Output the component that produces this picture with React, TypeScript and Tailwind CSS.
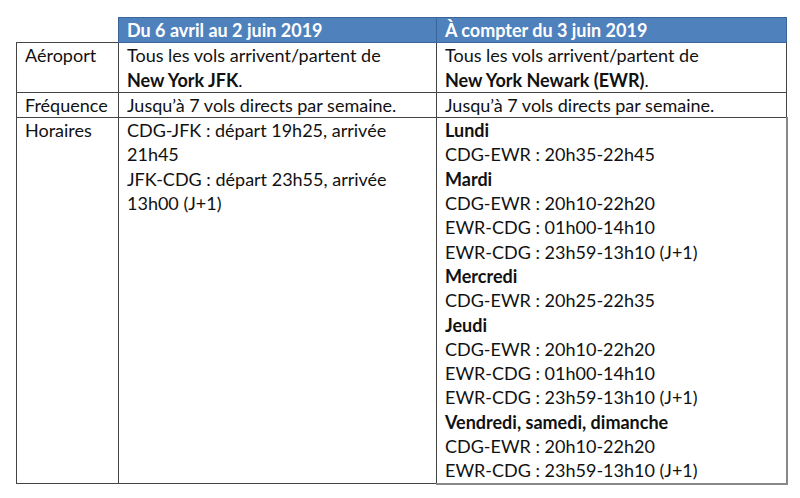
export default function App() {
  const font = { fontFamily: "Lato, 'Open Sans', sans-serif" };
  const cell = "align-top px-[8px] py-0 leading-[24.3px] border border-[#444]";
  const newark: { bold?: boolean; t: string }[] = [
    { bold: true, t: "Lundi" },
    { t: "CDG-EWR : 20h35-22h45" },
    { bold: true, t: "Mardi" },
    { t: "CDG-EWR : 20h10-22h20" },
    { t: "EWR-CDG : 01h00-14h10" },
    { t: "EWR-CDG : 23h59-13h10 (J+1)" },
    { bold: true, t: "Mercredi" },
    { t: "CDG-EWR : 20h25-22h35" },
    { bold: true, t: "Jeudi" },
    { t: "CDG-EWR : 20h10-22h20" },
    { t: "EWR-CDG : 01h00-14h10" },
    { t: "EWR-CDG : 23h59-13h10 (J+1)" },
    { bold: true, t: "Vendredi, samedi, dimanche" },
    { t: "CDG-EWR : 20h10-22h20" },
    { t: "EWR-CDG : 23h59-13h10 (J+1)" },
  ];

  return (
    <div className="w-[800px] h-[498px] bg-white pt-[17px] pl-[16px]" style={font}>
      <table className="border-collapse text-[18px] text-[#111] table-fixed w-[770px]">
        <colgroup>
          <col className="w-[102px]" />
          <col className="w-[318px]" />
          <col className="w-[350px]" />
        </colgroup>
        <thead>
          <tr>
            <th className="p-0 border-0"></th>
            <th className="text-left font-bold text-white bg-[#4f81bd] border border-[#3a659a] px-[8px] py-0 leading-[24.3px]">
              Du 6 avril au 2 juin 2019
            </th>
            <th className="text-left font-bold text-white bg-[#4f81bd] border border-[#3a659a] px-[8px] py-0 leading-[24.3px]">
              À compter du 3 juin 2019
            </th>
          </tr>
        </thead>
        <tbody>
          <tr>
            <td className={cell}>Aéroport</td>
            <td className={cell}>
              Tous les vols arrivent/partent de
              <br />
              <b>New York JFK</b>.
            </td>
            <td className={cell}>
              Tous les vols arrivent/partent de
              <br />
              <b>New York Newark (EWR)</b>.
            </td>
          </tr>
          <tr>
            <td className={cell}>Fréquence</td>
            <td className={cell}>Jusqu’à 7 vols directs par semaine.</td>
            <td className={cell}>Jusqu’à 7 vols directs par semaine.</td>
          </tr>
          <tr>
            <td className={cell}>Horaires</td>
            <td className={cell}>
              CDG-JFK : départ 19h25, arrivée
              <br />
              21h45
              <br />
              JFK-CDG : départ 23h55, arrivée
              <br />
              13h00 (J+1)
            </td>
            <td className={`${cell} border-b-2 border-b-[#888] border-r-2 border-r-[#888]`}>
              {newark.map((l, i) => (
                <div key={i} className={l.bold ? "font-bold" : ""}>
                  {l.t}
                </div>
              ))}
            </td>
          </tr>
        </tbody>
      </table>
    </div>
  );
}
